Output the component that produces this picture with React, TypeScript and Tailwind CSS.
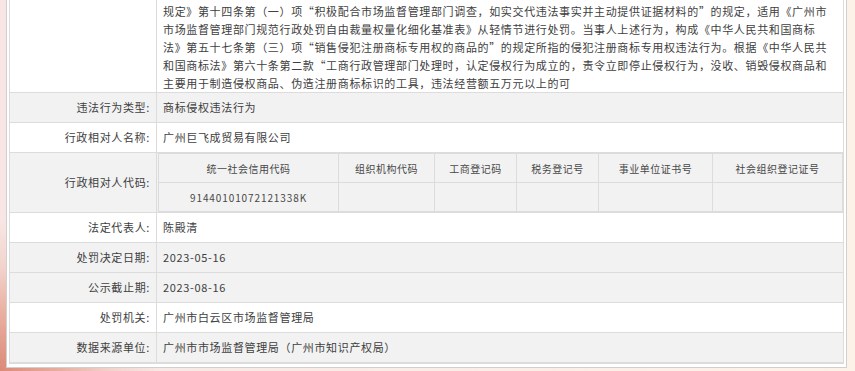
import React from 'react'

const caseText = [
  '规定》第十四条第（一）项“积极配合市场监督管理部门调查，如实交代违法事实并主动提供证据材料的”的规定，适用《广州市',
  '市场监督管理部门规范行政处罚自由裁量权量化细化基准表》从轻情节进行处罚。当事人上述行为，构成《中华人民共和国商标',
  '法》第五十七条第（三）项“销售侵犯注册商标专用权的商品的”的规定所指的侵犯注册商标专用权违法行为。根据《中华人民共',
  '和国商标法》第六十条第二款“工商行政管理部门处理时，认定侵权行为成立的，责令立即停止侵权行为，没收、销毁侵权商品和',
  '主要用于制造侵权商品、伪造注册商标标识的工具，违法经营额五万元以上的可',
]

const codeHeads = ['统一社会信用代码', '组织机构代码', '工商登记码', '税务登记号', '事业单位证书号', '社会组织登记证号']
const codeValues = ['91440101072121338K', '', '', '', '', '']

const rowsBefore = [
  { label: '违法行为类型', value: '商标侵权违法行为', gray: true },
  { label: '行政相对人名称', value: '广州巨飞成贸易有限公司', gray: false },
]

const rowsAfter = [
  { label: '法定代表人', value: '陈殿清', gray: false },
  { label: '处罚决定日期', value: '2023-05-16', gray: true },
  { label: '公示截止期', value: '2023-08-16', gray: true },
  { label: '处罚机关', value: '广州市白云区市场监督管理局', gray: false },
  { label: '数据来源单位', value: '广州市市场监督管理局（广州市知识产权局）', gray: true },
]

function InfoRow({ label, value, gray }: { label: string; value: string; gray: boolean }) {
  return (
    <div className={`flex h-[30px] border-b border-[#dcdcdc] ${gray ? 'bg-[#f2f2f2]' : 'bg-white'}`}>
      <div className="w-[147px] shrink-0 border-r border-[#dcdcdc] flex items-center justify-end pr-[6px]">
        {label}:
      </div>
      <div className="flex-1 flex items-center pl-[6px]">{value}</div>
    </div>
  )
}

export default function App() {
  return (
    <div
      className="w-[855px] h-[371px] overflow-hidden bg-[radial-gradient(ellipse_160px_150px_at_0%_100%,#dc8a78_0%,#e9b1a3_40%,#f3d4cd_70%,transparent_100%),linear-gradient(90deg,#f7e6e4,#fdf2e8)] text-[#404040] text-[11px] tracking-[0.65px]"
      style={{ fontFamily: '"Noto Sans CJK SC", "Noto Sans", sans-serif' }}
    >
      <div className="ml-[6px] w-[841px] bg-white border-x border-b border-[#d0d0d0] px-[2px] pb-[3px]">
        <div className="border-x border-b border-[#dcdcdc]">
          {/* decision text, continues from above */}
          <div className="flex border-b border-[#dcdcdc] bg-white">
            <div className="w-[147px] shrink-0 border-r border-[#dcdcdc]" />
            <div className="flex-1 pl-[6px] pt-[2px] leading-[18px] whitespace-nowrap">
              {caseText.map((line) => (
                <div key={line}>{line}</div>
              ))}
            </div>
          </div>

          {rowsBefore.map((r) => (
            <InfoRow key={r.label} {...r} />
          ))}

          <div className="flex h-[60px] border-b border-[#dcdcdc] bg-[#f2f2f2]">
            <div className="w-[147px] shrink-0 border-r border-[#dcdcdc] flex items-center justify-end pr-[6px]">
              行政相对人代码:
            </div>
            <div className="flex-1 pl-[1px]">
              <div className="w-[685px] border-l border-t border-[#dcdcdc] grid grid-cols-[180px_96px_82px_82px_114px_130px] text-[10px] tracking-[0.5px] text-[#484848]">
                {codeHeads.map((h) => (
                  <div key={h} className="h-[29px] border-r border-b border-[#dcdcdc] flex items-center justify-center">
                    {h}
                  </div>
                ))}
                {codeValues.map((v, i) => (
                  <div key={i} className="h-[29px] border-r border-b border-[#dcdcdc] flex items-center justify-center tracking-[0.9px]">
                    {v}
                  </div>
                ))}
              </div>
            </div>
          </div>

          {rowsAfter.map((r) => (
            <InfoRow key={r.label} {...r} />
          ))}
        </div>
      </div>
    </div>
  )
}
